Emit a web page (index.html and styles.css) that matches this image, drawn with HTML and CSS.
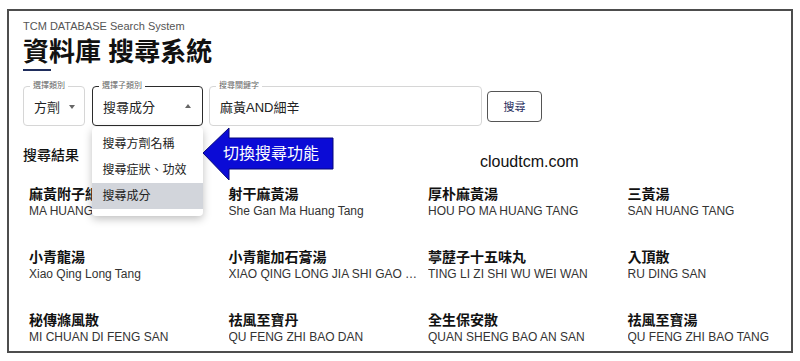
FILE: index.html
```html
<!DOCTYPE html>
<html lang="zh-Hant">
<head>
    <meta charset="UTF-8">
    <meta name="viewport" content="width=device-width, initial-scale=1.0">
    <title>TCM DATABASE Search System</title>
    <link rel="stylesheet" href="styles.css">
</head>
<body>
    <div class="frame">
        <div class="subtitle">TCM DATABASE Search System</div>
        <h1 class="title">資料庫 搜尋系統</h1>
        <div class="title-bar"></div>

        <div class="search-row">
            <div class="field field-type">
                <span class="field-label">選擇類別</span>
                <span class="field-value">方劑</span>
                <span class="caret down"></span>
            </div>
            <div class="field field-sub active">
                <span class="field-label">選擇子類別</span>
                <span class="field-value">搜尋成分</span>
                <span class="caret up"></span>
                <ul class="menu">
                    <li>搜尋方劑名稱</li>
                    <li>搜尋症狀、功效</li>
                    <li class="selected">搜尋成分</li>
                </ul>
            </div>
            <div class="field field-keyword">
                <span class="field-label">搜尋關鍵字</span>
                <span class="field-value">麻黃AND細辛</span>
            </div>
            <button class="search-btn">搜尋</button>
        </div>

        <h2 class="results-title">搜尋結果</h2>

        <div class="results">
            <div class="item"><div class="name">麻黃附子細辛湯</div><div class="pinyin">MA HUANG FU ZI XI XIN TANG</div></div>
            <div class="item"><div class="name">射干麻黃湯</div><div class="pinyin">She Gan Ma Huang Tang</div></div>
            <div class="item"><div class="name">厚朴麻黃湯</div><div class="pinyin">HOU PO MA HUANG TANG</div></div>
            <div class="item"><div class="name">三黃湯</div><div class="pinyin">SAN HUANG TANG</div></div>

            <div class="item"><div class="name">小青龍湯</div><div class="pinyin">Xiao Qing Long Tang</div></div>
            <div class="item"><div class="name">小青龍加石膏湯</div><div class="pinyin">XIAO QING LONG JIA SHI GAO TANG</div></div>
            <div class="item"><div class="name">葶藶子十五味丸</div><div class="pinyin">TING LI ZI SHI WU WEI WAN</div></div>
            <div class="item"><div class="name">入頂散</div><div class="pinyin">RU DING SAN</div></div>

            <div class="item"><div class="name">秘傳滌風散</div><div class="pinyin">MI CHUAN DI FENG SAN</div></div>
            <div class="item"><div class="name">祛風至寶丹</div><div class="pinyin">QU FENG ZHI BAO DAN</div></div>
            <div class="item"><div class="name">全生保安散</div><div class="pinyin">QUAN SHENG BAO AN SAN</div></div>
            <div class="item"><div class="name">祛風至寶湯</div><div class="pinyin">QU FENG ZHI BAO TANG</div></div>
        </div>

        <div class="callout">
            <svg width="132" height="54" viewBox="0 0 132 54">
                <polygon points="1,26 27,1 27,11 131,11 131,42 27,42 27,53" fill="#0b0bd6" stroke="#07077a" stroke-width="1"/>
            </svg>
            <span class="callout-text">切換搜尋功能</span>
        </div>

        <div class="watermark">cloudtcm.com</div>
    </div>
</body>
</html>
```

FILE: styles.css
```css
body {
    margin: 0;
    background: #fff;
    font-family: "Liberation Sans", "Noto Sans CJK TC", sans-serif;
    color: #1a1a1a;
}
.frame {
    position: relative;
    box-sizing: border-box;
    width: 786px;
    height: 344px;
    margin: 9px 0 0 7px;
    border: 2px solid #4d4d4d;
    padding: 0 0 0 14px;
    overflow: hidden;
}
.subtitle {
    margin-top: 8px;
    font-size: 11px;
    line-height: 14px;
    color: #555;
}
.title {
    margin: 4px 0 0;
    font-size: 26px;
    line-height: 30px;
    font-weight: bold;
    color: #111;
}
.title-bar {
    width: 28px;
    height: 2px;
    margin-top: 2px;
    background: #1f2d5c;
}
.search-row {
    display: flex;
    align-items: center;
    margin-top: 15px;
}
.field {
    position: relative;
    box-sizing: border-box;
    height: 40px;
    display: flex;
    align-items: center;
    padding-left: 10px;
    border: 1px solid #d6d6d6;
    border-radius: 4px;
}
.field-type {
    width: 62px;
}
.field-sub {
    width: 111px;
    margin-left: 7px;
}
.field-keyword {
    width: 273px;
    margin-left: 6px;
}
.field.active {
    border: 1.5px solid #2b2b2b;
}
.field-label {
    position: absolute;
    top: -7px;
    left: 6px;
    padding: 0 3px;
    background: #fff;
    font-size: 8px;
    line-height: 12px;
    color: #666;
}
.field-value {
    font-size: 13px;
    color: #222;
}
.caret {
    position: absolute;
    right: 9px;
    top: 18px;
    width: 0;
    height: 0;
    border-left: 3.5px solid transparent;
    border-right: 3.5px solid transparent;
}
.caret.down {
    border-top: 4px solid #666;
}
.caret.up {
    top: 17px;
    right: 11px;
    border-bottom: 4px solid #666;
}
.menu {
    position: absolute;
    top: 40px;
    left: -1.5px;
    width: 111px;
    margin: 0;
    padding: 4px 0 7px;
    list-style: none;
    background: #fff;
    border-radius: 4px;
    box-shadow: 0 3px 9px rgba(0, 0, 0, 0.25);
    z-index: 2;
}
.menu li {
    height: 26px;
    line-height: 26px;
    padding-left: 11px;
    font-size: 12px;
    color: #222;
}
.menu li.selected {
    background: #d2d5db;
}
.search-btn {
    box-sizing: border-box;
    width: 55px;
    height: 31px;
    margin-left: 5px;
    border: 1.5px solid #555;
    border-radius: 4px;
    background: #fff;
    font-family: "Liberation Sans", "Noto Sans CJK TC", sans-serif;
    font-size: 11px;
    color: #1f2d5c;
}
.results-title {
    margin: 19px 0 0;
    font-size: 14px;
    line-height: 20px;
    font-weight: 500;
    color: #111;
}
.results {
    display: grid;
    grid-template-columns: repeat(4, 199.5px);
    row-gap: 29px;
    margin-top: 20px;
    padding-left: 6px;
}
.item {
    width: 190px;
}
.name {
    font-size: 14px;
    line-height: 18px;
    font-weight: bold;
    color: #111;
}
.pinyin {
    font-size: 12px;
    line-height: 16px;
    color: #333;
    white-space: nowrap;
    overflow: hidden;
    text-overflow: ellipsis;
}
.callout {
    position: absolute;
    left: 193px;
    top: 116px;
    width: 132px;
    height: 54px;
    z-index: 3;
}
.callout svg {
    display: block;
}
.callout-text {
    position: absolute;
    left: 21px;
    top: 16px;
    font-size: 16px;
    line-height: 22px;
    color: #fff;
    white-space: nowrap;
}
.watermark {
    position: absolute;
    left: 471px;
    top: 141px;
    font-size: 16px;
    line-height: 20px;
    color: #111;
}
```
